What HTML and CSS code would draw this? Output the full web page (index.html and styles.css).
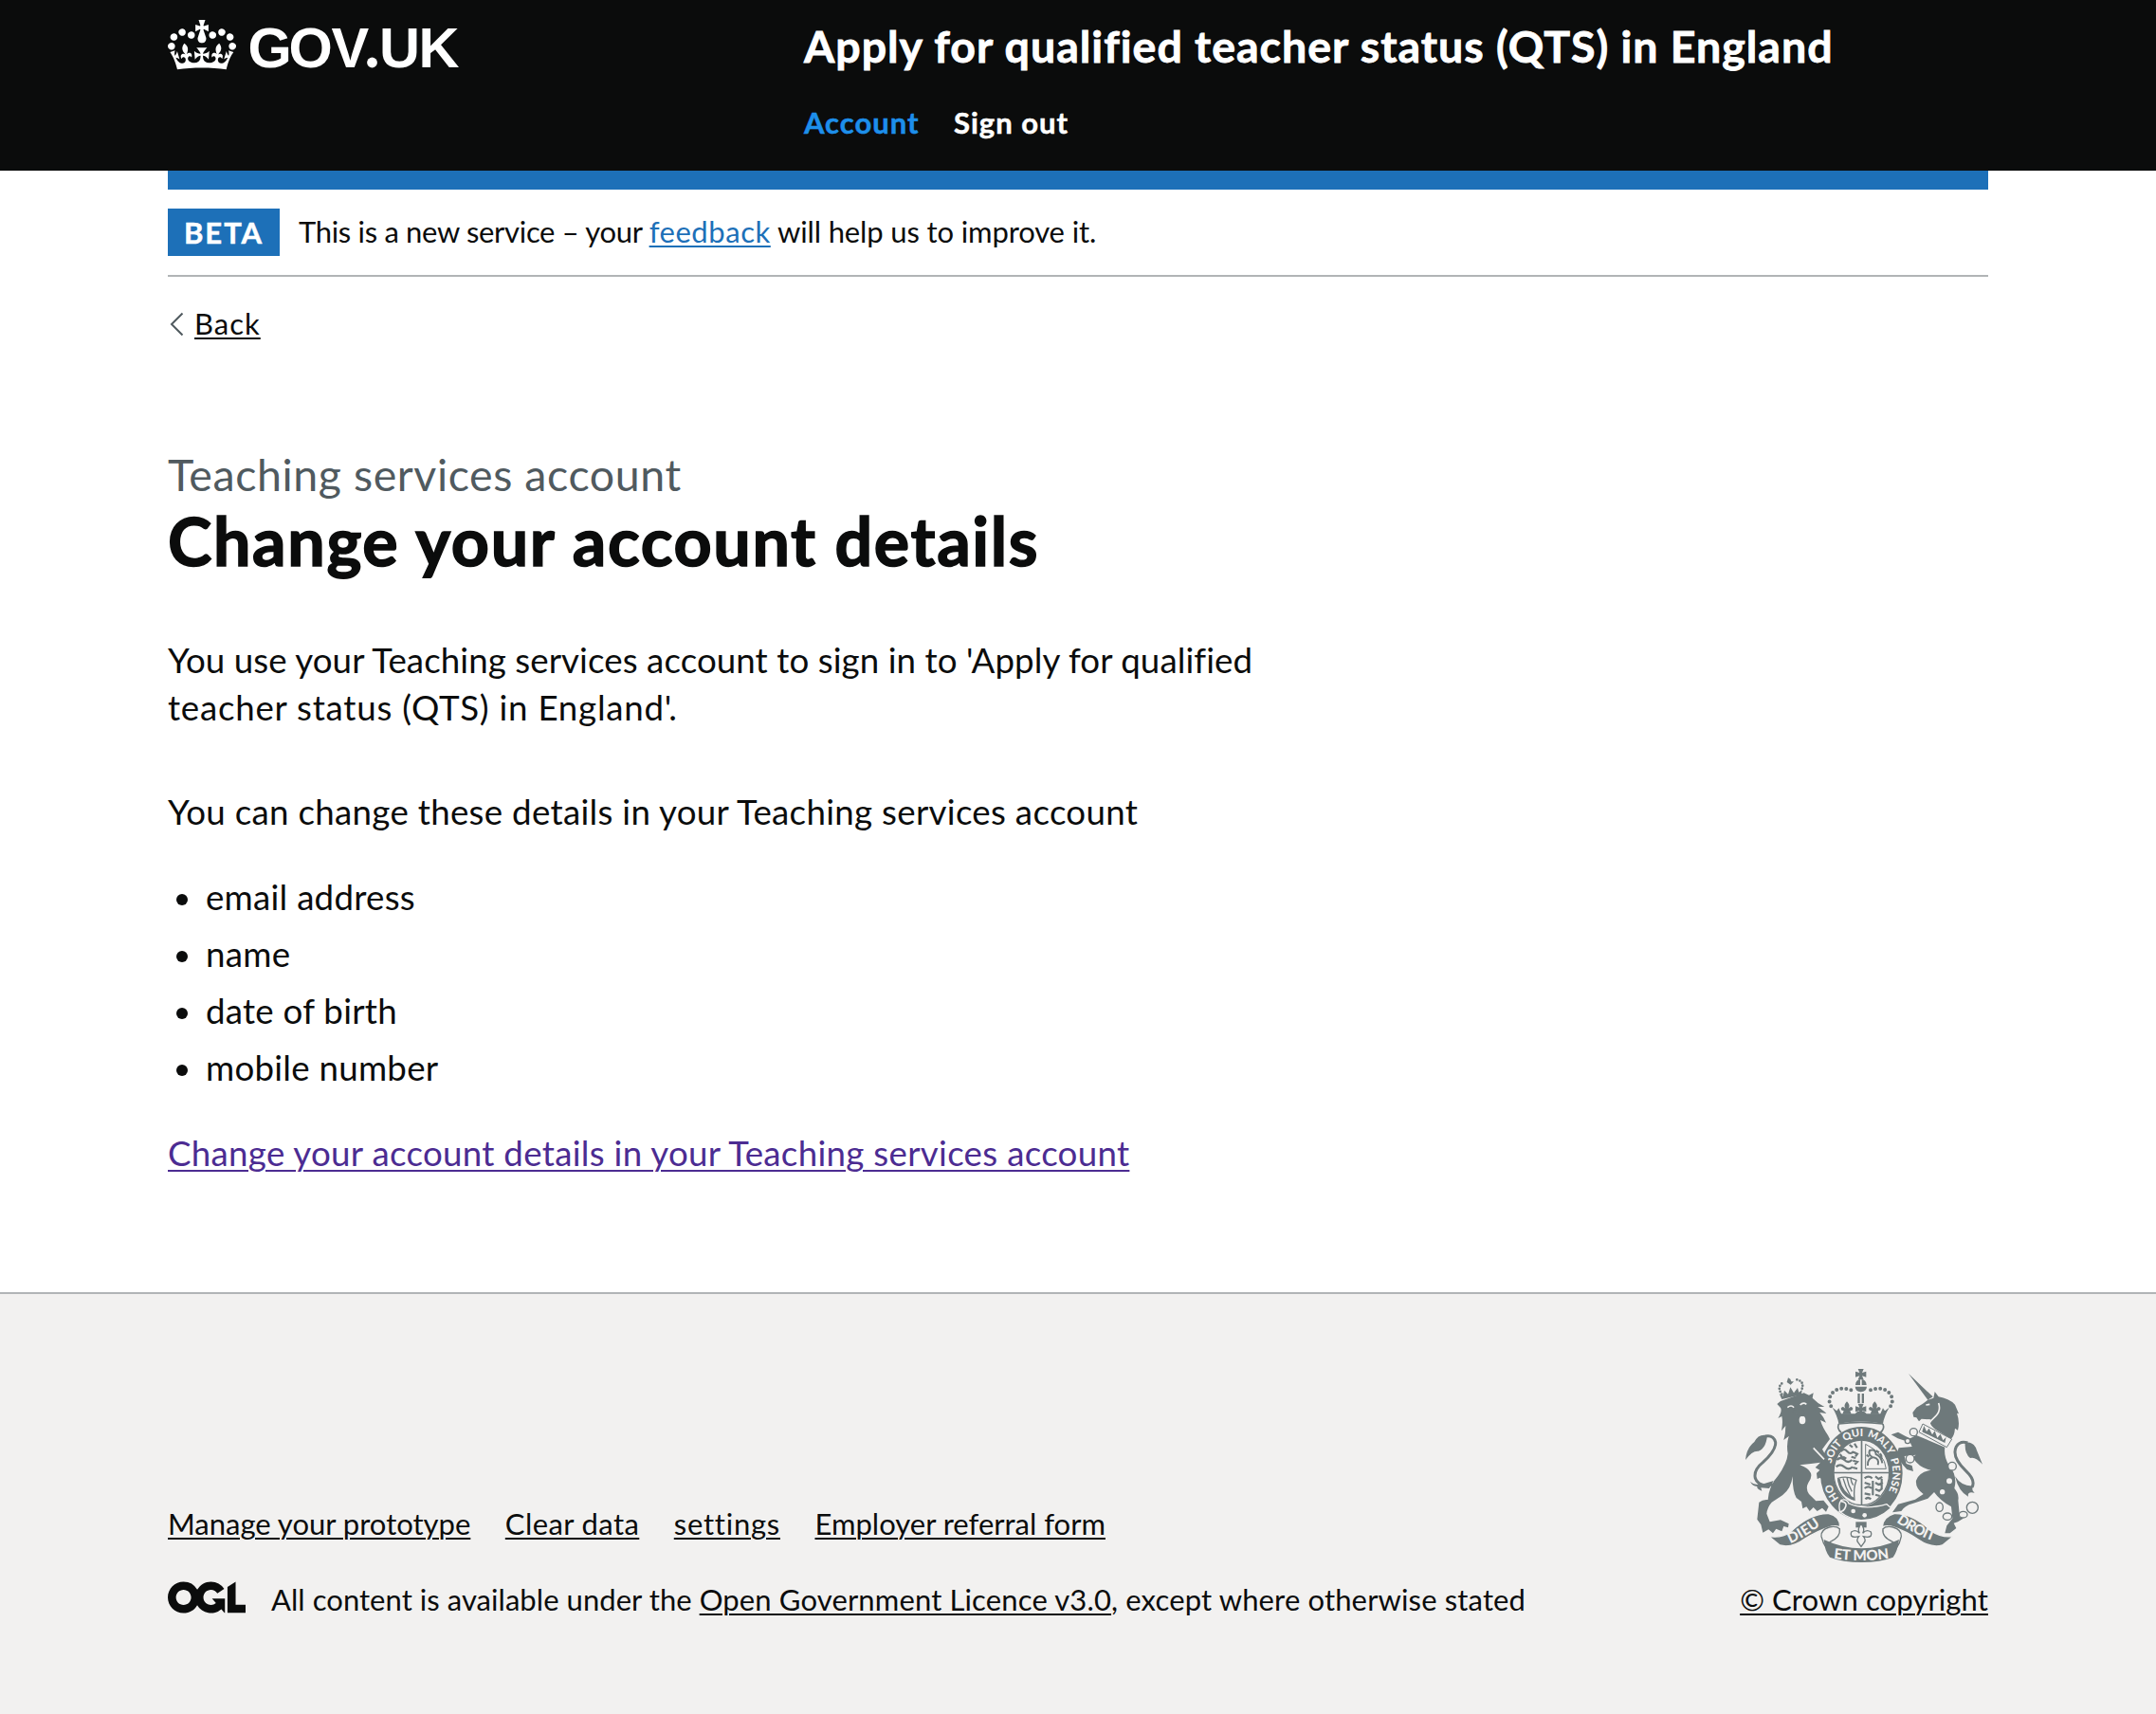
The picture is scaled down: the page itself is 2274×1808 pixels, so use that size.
FILE: index.html
```html
<!DOCTYPE html>
<html lang="en">
<head>
<meta charset="utf-8">
<title>Change your account details – Apply for qualified teacher status (QTS) in England</title>
<link rel="stylesheet" href="styles.css">
</head>
<body>
<header class="header">
  <div class="container header-grid">
    <a class="logo" href="#" aria-label="GOV.UK">
      <svg width="308" height="60" viewBox="0 0 308 60">
        <g transform="translate(0 1) scale(.5455)" fill="#fff">
          <path d="M25 30.2c3.5 1.5 7.7-.2 9.1-3.7 1.5-3.6-.2-7.8-3.9-9.2-3.6-1.4-7.6.3-9.1 3.9-1.4 3.5.3 7.5 3.9 9zM9 39.5c3.6 1.5 7.8-.2 9.2-3.7 1.5-3.6-.2-7.8-3.9-9.1-3.6-1.5-7.6.2-9.1 3.8-1.4 3.5.3 7.5 3.8 9zM4.4 57.2c3.5 1.5 7.7-.2 9.1-3.8 1.5-3.6-.2-7.7-3.9-9.1-3.5-1.5-7.6.3-9.1 3.8-1.4 3.5.3 7.6 3.9 9.1zm38.3-21.4c3.5 1.5 7.7-.2 9.1-3.8 1.5-3.6-.2-7.7-3.9-9.1-3.6-1.5-7.6.3-9.1 3.8-1.3 3.6.4 7.7 3.9 9.1zm64.4-5.6c-3.6 1.5-7.8-.2-9.1-3.7-1.5-3.6.2-7.8 3.8-9.2 3.6-1.4 7.7.3 9.2 3.9 1.3 3.5-.4 7.5-3.9 9zm15.9 9.3c-3.6 1.5-7.7-.2-9.1-3.7-1.5-3.6.2-7.8 3.7-9.1 3.6-1.5 7.7.2 9.2 3.8 1.5 3.5-.3 7.5-3.8 9zm4.7 17.7c-3.6 1.5-7.8-.2-9.2-3.8-1.5-3.6.2-7.7 3.9-9.1 3.6-1.5 7.7.3 9.2 3.8 1.3 3.5-.4 7.6-3.9 9.1zM89.3 35.8c-3.6 1.5-7.8-.2-9.2-3.8-1.4-3.6.2-7.7 3.9-9.1 3.6-1.5 7.7.3 9.2 3.8 1.4 3.6-.3 7.7-3.9 9.1zM69.7 17.7l8.9 4.7V9.3l-8.9 2.8c-.2-.3-.5-.6-.9-.9L72.4 0H59.6l3.5 11.2c-.3.3-.6.5-.9.9l-8.8-2.8v13.1l8.8-4.7c.3.3.6.7.9.9l-5 15.4v.1c-.2.8-.4 1.6-.4 2.4 0 4.1 3.1 7.5 7 8.1h.2c.3 0 .7.1 1 .1.4 0 .7 0 1-.1h.2c4-.6 7.1-4.1 7.1-8.1 0-.8-.1-1.7-.4-2.4V34l-5.1-15.4c.4-.2.7-.6 1-.9zM66 92.8c16.9 0 32.8 1.1 47.1 3.2 4-16.9 8.9-26.7 14-33.5l-9.6-3.4c1 4.9 1.1 7.2 0 10.2-1.5-1.4-3-4.3-4.2-8.7L108.6 76c2.8-2 5-3.2 7.5-3.3-4.4 9.4-10 11.9-13.6 11.2-4.3-.8-6.3-4.6-5.6-7.9 1-4.7 5.7-5.9 8-.5 4.3-8.7-3-11.4-7.6-8.8 7.1-7.2 7.9-13.5 2.1-21.1-8 6.1-8.1 12.3-4.5 20.8-4.7-5.4-12.1-2.5-9.5 6.2 3.4-5.2 7.9-2 7.2 3.1-.6 4.3-6.4 7.8-13.5 7.2-10.3-.9-10.9-8-11.2-13.8 2.5-.5 7.1 1.8 11 7.3L80.2 60c-4.1 4.4-8 5.3-12.3 5.4 1.4-4.4 8-11.6 8-11.6H55.5s6.4 7.2 7.9 11.6c-4.2-.1-8-1-12.3-5.4l1.4 16.4c3.9-5.5 8.5-7.7 10.9-7.3-.3 5.8-.9 12.8-11.1 13.8-7.2.6-12.9-2.9-13.5-7.2-.7-5 3.8-8.3 7.1-3.1 2.7-8.7-4.6-11.6-9.4-6.2 3.7-8.5 3.6-14.7-4.6-20.8-5.8 7.6-5 13.9 2.2 21.1-4.7-2.6-11.9.1-7.7 8.8 2.3-5.5 7.1-4.2 8.1.5.7 3.3-1.3 7.1-5.7 7.9-3.5.7-9-1.8-13.5-11.2 2.5.1 4.7 1.3 7.5 3.3l-4.7-15.4c-1.2 4.4-2.7 7.2-4.3 8.7-1.1-3-.9-5.3 0-10.2l-9.5 3.4c5 6.9 9.9 16.7 14 33.5 14.8-2.1 30.8-3.2 47.7-3.2z"/>
        </g>
        <text class="wordmark" x="84.5 127.5 172.5 210 223 264.500" y="51">GOV<tspan fill="none">.</tspan>UK</text>
        <circle cx="215.5" cy="46" r="5.4" fill="#fff"/>
      </svg>
    </a>
    <div class="header-content">
      <a class="service-name" href="#">Apply for qualified teacher status (QTS) in England</a>
      <nav class="header-nav"><a class="active" href="#">Account</a><a href="#">Sign out</a></nav>
    </div>
  </div>
</header>

<div class="container">
  <div class="phase-banner">
    <strong class="tag">BETA</strong>
    <span class="phase-text"><span class="t1">This is a new service – your </span><a class="t2" href="#">feedback</a><span class="t3"> will help us to improve it.</span></span>
  </div>
  <a class="back" href="#">
    <svg width="15" height="26" viewBox="0 0 15 26"><path d="M13.5 1.5 2 13l11.500 11.500" fill="none" stroke="#505a5f" stroke-width="2"/></svg>
    <span>Back</span>
  </a>
  <main class="main">
    <span class="caption">Teaching services account</span>
    <h1>Change your account details</h1>
    <p class="line1">You use your Teaching services account to sign in to 'Apply for qualified<br><span class="line2">teacher status (QTS) in England'.</span></p>
    <p class="intro">You can change these details in your Teaching services account</p>
    <ul>
      <li>email address</li>
      <li>name</li>
      <li>date of birth</li>
      <li>mobile number</li>
    </ul>
    <p class="action"><a href="#">Change your account details in your Teaching services account</a></p>
  </main>
</div>

<footer class="footer">
  <div class="container footer-row">
    <div class="footer-main">
      <div class="footer-links"><a href="#">Manage your prototype</a><a class="k2" href="#">Clear data</a><a class="k3" href="#">settings</a><a href="#">Employer referral form</a></div>
      <div class="licence">
        <svg width="82" height="34" viewBox="0 0 483.2 195.700"><path fill="#0b0c0c" d="M421.5 142.8V.1l-50.7 32.3v161.1h112.4v-50.7zm-122.3-9.6A47.12 47.12 0 0 1 221 97.8c0-26 21.100-47.100 47.100-47.100 16.700 0 31.400 8.700 39.700 21.800l42.700-27.200A97.630 97.630 0 0 0 268.100 0c-36.500 0-68.300 20.100-85.100 49.700A98 98 0 0 0 97.800 0C43.900 0 0 43.900 0 97.800s43.900 97.800 97.800 97.800c36.500 0 68.300-20.100 85.100-49.700a97.760 97.760 0 0 0 149.600 25.400l19.400 22.200h3v-87.800h-80l24.300 27.500zM97.800 145c-26 0-47.100-21.100-47.100-47.100s21.100-47.100 47.100-47.100 47.100 21.100 47.100 47.100S123.800 145 97.800 145"/></svg>
        <span><span class="k1">All content is available under the </span><a class="k4" href="#">Open Government Licence v3.0</a><span class="k4">, except where otherwise stated</span></span>
      </div>
    </div>
    <div class="footer-crest">
      <svg class="crest" width="250" height="204" viewBox="63 72 750 612">
        <defs>
          <path id="garter" d="M361 484A99 116 0 1 1 499 484"/>
          <path id="dieu" d="M205 624Q250 606 312 558"/>
          <path id="etmon" d="M340 672Q430 684 520 671"/>
          <path id="droit" d="M540 556Q600 598 672 622"/>
          <g id="fleur"><path d="M0-20Q12-8 5 2Q14-8 19 2Q19 10 10 9L14 20H-14L-10 9Q-19 10-19 2Q-14-8-5 2Q-12-8 0-20z"/></g>
          <g id="pattee"><path d="M-9-17H9L4-5L17-9V9L4 5L9 17H-9L-4 5L-17 9V-9L-4-5z"/></g>
        </defs>

        <!-- royal crown -->
        <use href="#pattee" x="428" y="89"/>
        <path d="M411 123Q412 106 426 105V123zM431 123V105Q445 106 446 123zM410 128H447Q446 143 428 145Q411 143 410 128z"/>
        <path d="M418 150H425V180H418zM431 150H438V180H431z"/>
        <g class="beads">
          <path d="M397 139Q360 125 337 149Q321 170 335 192"/>
          <path d="M459 139Q496 125 519 149Q535 170 521 192"/>
        </g>
        <use href="#pattee" x="428" y="199"/>
        <use href="#fleur" x="384" y="195"/>
        <use href="#fleur" x="472" y="195"/>
        <path d="M338 194L352 205L358 196L366 214L410 214L418 206H438L446 214L490 214L498 196L504 205L518 194Q502 220 498 245Q428 232 358 245Q354 220 338 194z"/>
        <path class="line" stroke-width="5" d="M358 246Q352 262 366 273M498 246Q504 262 490 273M358 246Q428 236 498 246"/>

        <!-- garter and shield -->
        <ellipse cx="430" cy="402" rx="109" ry="126" fill="none" stroke="#6e797b" stroke-width="42"/>
        <ellipse cx="430" cy="400" rx="88" ry="103" fill="#f2f1f0" stroke="#6e797b" stroke-width="4"/>
        <path d="M428 297H433V503H428zM342 398H518V403H342z"/>
        <g class="line" stroke-width="6.500">
          <path d="M365 333q10-12 20 0t20 0M362 342l8 10M352 360q12-12 24 0t24 0M350 382q12-12 26 0t26 0M392 312l10 8M408 308l8 14M405 335l12 6-6 8M403 362l14 4-8 8M403 384l14 4M372 350l10 6M398 350l14 4"/>
          <path d="M440 418q12-10 24 0M440 432l18 6M440 450q12-10 22 0M440 466l18 4M442 484q8-8 18 0M474 412l10 8 12-6M474 432l10 6 14-6M474 452l12 6 10-8M474 470l14 4M466 426v46M494 420v34"/>
          <path stroke-width="6" d="M450 378q-2-22 16-26q-16-8-10-22q18-6 20 12q16 6 20 28M468 352q20 4 14 24M488 340q8 6 4 14M476 330l10 6M454 350l-8-6"/>
          <path stroke-width="3" d="M443 310V388H508Q504 340 443 310z"/>
          <path stroke-width="4" d="M356 418Q385 408 414 424Q404 450 408 486Q362 474 356 418zM372 418q8 30 24 58M384 416q4 24 16 44M396 418q2 14 8 22"/>
          <path stroke-width="8" d="M358 420Q366 466 406 484"/>
        </g>
        <g class="motto">
          <text><textPath href="#garter" startOffset="3">HO</textPath></text>
          <text><textPath href="#garter" startOffset="118">SOIT</textPath></text>
          <text><textPath href="#garter" startOffset="203">QUI</textPath></text>
          <text class="tight"><textPath href="#garter" startOffset="277">MAL Y</textPath></text>
          <text><textPath href="#garter" startOffset="384" textLength="104">PENSE</textPath></text>
        </g>
        <path class="edge" d="M366 487Q384 482 390 498Q440 520 510 500L524 512Q480 552 428 551Q390 546 362 524Q356 500 366 487z"/>
        <circle cx="404" cy="522" r="7" fill="#f2f1f0"/><circle cx="440" cy="535" r="7" fill="#f2f1f0"/>
        <path class="gap" d="M364 490q22 4 16 18q-6 18-22 16"/>

        <!-- lion -->
        <path class="line" stroke-width="9" d="M150 437Q104 448 94 418Q88 392 118 368Q160 330 158 304Q152 280 126 285"/>
        <path d="M132 282Q104 276 91 303Q66 322 63 360Q84 330 104 332Q128 324 132 282zM78 428Q96 445 132 432L152 426L138 450L112 448L115 458Q98 452 100 444Q84 442 78 428z"/>
        <path d="M163 183L174 174L248 148L264 155L278 148L275 164Q290 180 313 192L292 192Q312 205 319 213L298 210Q312 226 318 242L300 234Q306 256 324 282L330 294L306 326L332 372L340 420L322 432L308 428L300 416L290 420L288 402L298 392L284 384L300 368L270 372L235 376Q262 385 270 402Q274 416 262 432Q252 450 264 468L286 490L310 488L326 508L318 524L306 512L290 522L278 510L266 522L256 508L244 514L240 492L224 480Q212 460 212 412Q208 450 180 472L146 494Q132 510 130 530L140 556L174 550L200 562L198 574L184 570L178 586L160 578L150 592L136 580L118 590L112 565L100 548L106 494Q118 484 134 486Q138 440 165 412Q195 370 197 340Q192 310 200 285L184 297Q190 275 190 252L177 268Q182 240 178 222L166 228Q180 205 174 195z"/>
        <path class="gap" d="M278 322L312 358M196 194q12-10 20 0M236 186q10-10 20-2M222 212q12-10 24 0"/>
        <ellipse cx="243" cy="234" rx="10" ry="13" fill="#f2f1f0"/><path d="M210 206Q232 194 252 206L246 222H232z"/>
        <path class="small-beads" d="M178 152Q160 128 184 114M226 106Q252 112 240 140"/>
        <path d="M170 150L182 158L186 140L198 152L205 130L216 148L228 132L232 146L242 138L240 154L178 168zM198 100L205 104L208 112L216 112L206 122L194 114z"/>

        <!-- unicorn -->
        <path class="line" stroke-width="9" d="M780 446Q792 424 760 394Q714 350 730 318Q742 298 766 306"/>
        <path d="M758 305Q786 300 795 330L813 374Q790 348 774 354Q756 340 758 305zM726 412Q748 446 787 442Q774 452 788 464Q764 458 768 476Q738 462 726 412z"/>
        <path d="M579 87L656 160L640 170zM592 210L604 194L624 182L640 170L658 164L662 144L674 160Q706 165 726 185L738 214L732 212Q742 240 735 266L726 260Q724 285 712 295Q690 278 665 264Q640 246 650 232L620 230L612 238L604 226L595 224z"/>
        <path class="gap" d="M674 180Q682 204 666 220Q650 234 640 250M634 186l12-2"/>
        <path d="M604 282L694 320Q690 350 706 375Q735 410 724 450Q740 468 736 488L740 530L752 545L735 556L722 560L730 576L710 592L694 592L700 568L718 545L714 508Q680 490 660 462L640 482L592 498Q566 505 556 522L528 526L546 500L600 485L626 468Q600 450 603 425Q612 398 650 392Q612 386 592 352L602 344L566 348L572 372L590 378L594 396L574 390L560 374L540 345L548 322L590 318L584 304L570 300L545 292L524 280L546 272L568 284L584 292z"/>
        <path fill="#f2f1f0" stroke="#6e797b" stroke-width="3" d="M624 246L716 294L700 320L612 272z"/>
        <path d="M622 270l6-18 8 18 8-10 10 20 8-12 8 22 10-12 8 20 10-10-4 18-70-34z"/>
        <g class="ring">
          <circle cx="595" cy="272" r="12"/><circle cx="576" cy="300" r="8"/><circle cx="584" cy="356" r="13"/><circle cx="717" cy="380" r="13"/>
          <ellipse cx="677" cy="509" rx="11" ry="14"/><ellipse cx="702" cy="539" rx="14" ry="11"/><ellipse cx="752" cy="533" rx="13" ry="10"/><circle cx="781" cy="511" r="18"/>
        </g>
        <circle cx="708" cy="427" r="9" fill="#f2f1f0"/><circle cx="686" cy="461" r="8" fill="#f2f1f0"/>

        <!-- ribbon -->
        <path class="edge" d="M138 602Q178 608 205 588Q268 528 326 530Q362 538 362 572Q345 566 330 572Q290 585 250 610Q210 640 172 630z"/>
        <path class="edge" d="M720 602Q680 606 650 584Q590 528 534 530Q498 540 496 572Q512 566 530 572Q570 585 610 612Q650 640 686 630z"/>
        <path class="ribbon" d="M328 573Q300 582 303 602Q308 624 320 640L330 620Q365 605 361 578Q350 568 328 573zM530 573Q558 582 556 602Q552 624 540 640L530 620Q494 605 498 578Q508 568 530 573z"/>
        <path d="M311 612Q370 640 430 640Q490 640 549 612Q544 650 530 668Q490 684 430 684Q370 684 330 668Q314 650 311 612z"/>
        <g class="motto ribbon-text">
          <text><textPath href="#dieu" textLength="112">DIEU</textPath></text>
          <text><textPath href="#etmon" startOffset="2" textLength="176">ET MON</textPath></text>
          <text><textPath href="#droit" textLength="132">DROIT</textPath></text>
        </g>
        <path d="M412 556H446V574H412z"/>
        <path fill="#f2f1f0" stroke="#6e797b" stroke-width="4" d="M429 562Q442 578 434 592Q446 578 460 588Q466 604 448 604L436 602Q446 614 438 622L429 634L420 622Q412 614 422 602L410 604Q392 604 398 588Q412 578 424 592Q416 578 429 562z"/>
      </svg>
      <a class="k5" href="#">© Crown copyright</a>
    </div>
  </div>
</footer>
</body>
</html>
```
FILE: styles.css
```css
* { box-sizing: border-box; }
body {
  margin: 0;
  min-height: 1808px;
  display: flex;
  flex-direction: column;
  background: #fff;
  color: #0b0c0c;
  font-family: Lato, "Liberation Sans", sans-serif;
  font-size: 31px;
  line-height: 40px;
}
a {
  color: inherit;
  text-decoration: underline;
  text-decoration-thickness: 2px;
  text-underline-offset: 3px;
}
.container { width: 1920px; margin: 0 auto; }

.header { height: 180px; background: #0b0c0c; color: #fff; }
.header a { text-decoration: none; }
.header-grid { display: grid; grid-template-columns: 671px 1fr; padding-top: 18px; }
.logo { display: block; padding-top: 2px; }
.logo svg { display: block; overflow: visible; }
.wordmark { font: bold 59.500px "Liberation Sans", Arial, sans-serif; fill: #fff; }
.header-content { display: flex; flex-direction: column; gap: 31px; }
.service-name { font-size: 46.500px; font-weight: 700; line-height: 60px; letter-spacing: .99px; -webkit-text-stroke: .8px; }
.header-nav { display: flex; gap: 36.500px; font-weight: 700; letter-spacing: 1px; -webkit-text-stroke: .5px; }
.header-nav .active { color: #1d8feb; }

.phase-banner {
  display: flex;
  align-items: flex-start;
  gap: 20px;
  padding: 20px 0;
  border-top: 20px solid #1d70b8;
  border-bottom: 2px solid #b1b4b6;
}
.tag { width: 118px; height: 50px; line-height: 50px; text-align: center; background: #1d70b8; color: #fff; letter-spacing: 2px; -webkit-text-stroke: .5px; }
.phase-text { line-height: 48px; white-space: pre; }
.phase-text a { color: #1d70b8; }
.t1 { letter-spacing: -.32px; }
.t2 { letter-spacing: .55px; }
.t3 { letter-spacing: -.13px; }

.back { display: inline-flex; align-items: center; gap: 11px; margin-top: 29px; padding-left: 2px; text-decoration: none; letter-spacing: 1px; }
.back span { text-decoration: underline; text-decoration-thickness: 2px; text-underline-offset: 3px; }
.back svg { position: relative; top: 1px; }

.main { padding: 108px 0 122px; font-size: 36.700px; line-height: 50px; }
.caption { display: block; color: #505a5f; font-size: 46.500px; line-height: 60px; letter-spacing: .58px; }
h1 { margin: 0 0 61px; font-size: 70px; font-weight: 700; line-height: 80px; letter-spacing: 1.650px; -webkit-text-stroke: 1.500px; }
.main p { margin: 0 0 60px; white-space: nowrap; }
.line1 { letter-spacing: .07px; }
.line2 { letter-spacing: .75px; }
.main .intro { margin-bottom: 40px; letter-spacing: .29px; }
ul { margin: 0 0 40px; padding: 0; list-style: none; display: flex; flex-direction: column; gap: 10px; letter-spacing: .25px; }
li { display: flex; align-items: center; gap: 19px; padding-left: 9px; }
li::before { content: ""; width: 12px; height: 12px; margin-top: 6px; border-radius: 50%; background: #0b0c0c; }
.main .action { margin: 0; letter-spacing: .29px; }
.action a { color: #4c2c92; text-underline-offset: 4px; }

.footer { flex: 1; border-top: 2px solid #b1b4b6; background: #f2f1f0; padding-top: 79px; }
.footer-row { display: flex; justify-content: space-between; align-items: flex-end; }
.footer-main { display: flex; flex-direction: column; gap: 40px; }
.footer-links { display: flex; gap: 36.500px; }
.k1 { letter-spacing: .05px; }
.k2 { letter-spacing: .4px; }
.k3 { letter-spacing: .75px; }
.k4 { letter-spacing: .14px; }
.k5 { letter-spacing: .11px; }
.licence { display: flex; align-items: flex-start; gap: 27px; }
.licence svg { margin-top: 1px; }
.footer-crest { display: flex; flex-direction: column; align-items: center; gap: 19px; }

.crest { display: block; fill: #6e797b; }
.crest .line { fill: none; stroke: #6e797b; }
.crest .gap { fill: none; stroke: #f2f1f0; stroke-width: 5; }
.crest .edge { stroke: #f2f1f0; stroke-width: 4; }
.crest .ring { fill: #f2f1f0; stroke: #6e797b; stroke-width: 4; }
.crest .ribbon { fill: #f2f1f0; stroke: #6e797b; stroke-width: 4; }
.crest .beads { fill: none; stroke: #6e797b; stroke-width: 12; stroke-linecap: round; stroke-dasharray: 0 15.500; }
.crest .small-beads { fill: none; stroke: #6e797b; stroke-width: 8; stroke-linecap: round; stroke-dasharray: 0 9.500; }
.crest .motto { fill: #f2f1f0; font: 900 33px Lato, sans-serif; }
.crest .tight { word-spacing: -6px; }
.crest .ribbon-text { font-size: 45px; }
```
